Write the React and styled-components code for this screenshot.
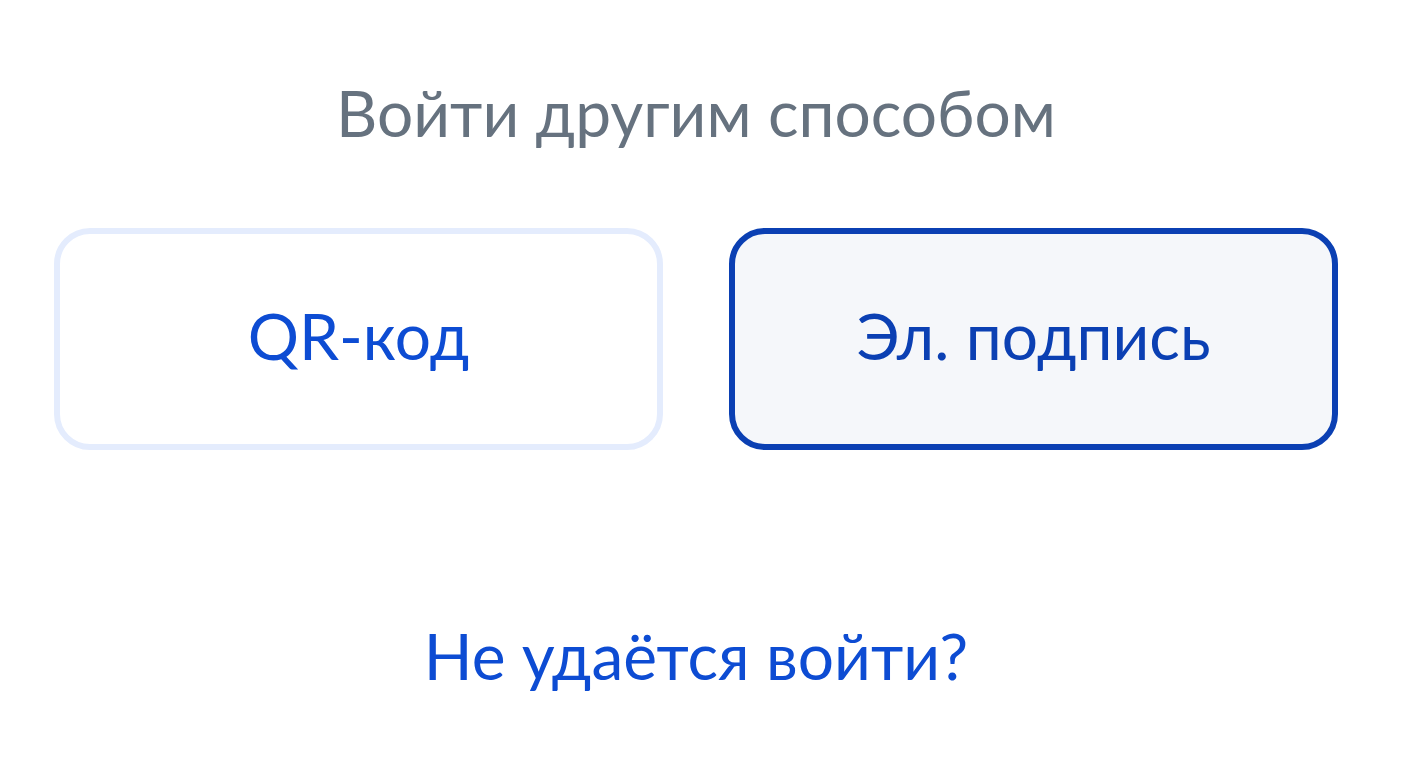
import React from "react";
import styled, { createGlobalStyle } from "styled-components";

const Global = createGlobalStyle`
  html, body { margin: 0; padding: 0; background: #ffffff; }
  body { font-family: Lato, "Noto Sans", sans-serif; }
`;

const Page = styled.div`
  width: 1284px;
  margin-left: 54px;
  padding-top: 74px;
  display: flex;
  flex-direction: column;
  align-items: center;
`;

const Title = styled.h2`
  margin: 0;
  font-weight: 400;
  font-size: 64px;
  line-height: 77px;
  color: #66727f;
  text-align: center;
`;

const Options = styled.div`
  margin-top: 77px;
  width: 100%;
  display: grid;
  grid-template-columns: 1fr 1fr;
  gap: 66px;
`;

const Option = styled.button`
  box-sizing: border-box;
  height: 222px;
  border-radius: 36px;
  border: 6px solid ${(p) => (p.$active ? "#0b40b3" : "#e4ecfd")};
  background: ${(p) => (p.$active ? "#f5f7fa" : "#ffffff")};
  color: ${(p) => (p.$active ? "#0b40b3" : "#0d4cd3")};
  font-family: Lato, "Noto Sans", sans-serif;
  font-size: 64px;
  line-height: 77px;
  padding: 0 0 8px;
  display: flex;
  align-items: center;
  justify-content: center;
  cursor: pointer;
`;

const Help = styled.a`
  margin-top: 167px;
  font-size: 64px;
  line-height: 77px;
  color: #0d4cd3;
  text-decoration: none;
  cursor: pointer;
`;

export default function App() {
  return (
    <>
      <Global />
      <Page>
        <Title>Войти другим способом</Title>
        <Options>
          <Option>QR-код</Option>
          <Option $active>Эл. подпись</Option>
        </Options>
        <Help>Не удаётся войти?</Help>
      </Page>
    </>
  );
}
